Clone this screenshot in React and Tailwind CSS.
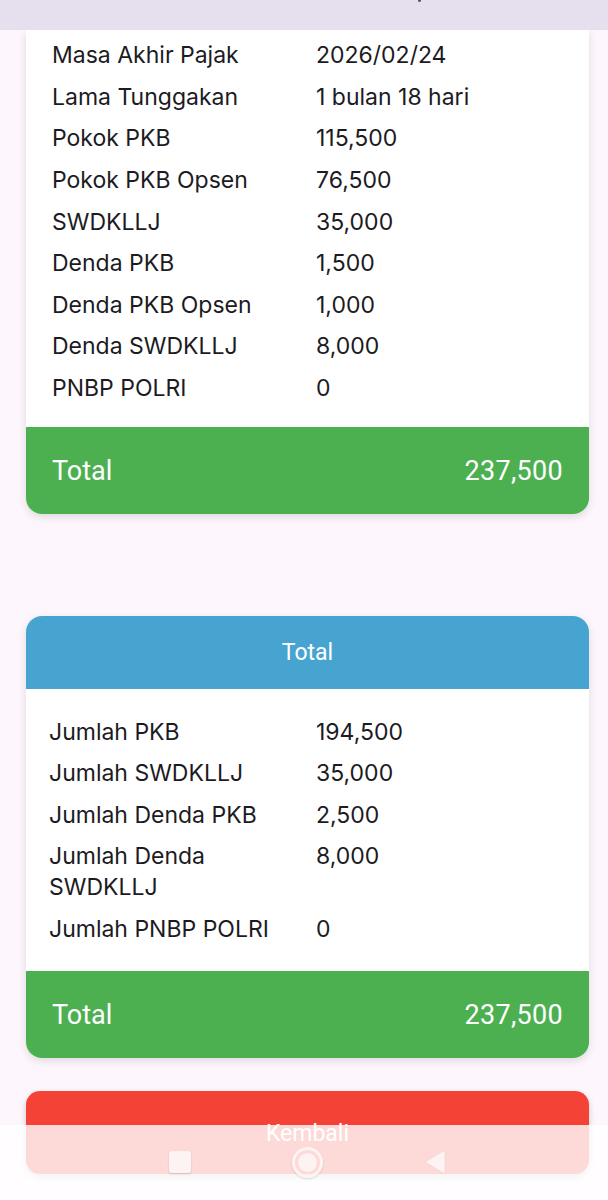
const detail = [
  ["Masa Akhir Pajak", "2026/02/24"],
  ["Lama Tunggakan", "1 bulan 18 hari"],
  ["Pokok PKB", "115,500"],
  ["Pokok PKB Opsen", "76,500"],
  ["SWDKLLJ", "35,000"],
  ["Denda PKB", "1,500"],
  ["Denda PKB Opsen", "1,000"],
  ["Denda SWDKLLJ", "8,000"],
  ["PNBP POLRI", "0"],
];

const summary = [
  ["Jumlah PKB", "194,500"],
  ["Jumlah SWDKLLJ", "35,000"],
  ["Jumlah Denda PKB", "2,500"],
  ["Jumlah Denda SWDKLLJ", "8,000"],
  ["Jumlah PNBP POLRI", "0"],
];

function Rows({ items, labelWidth }) {
  return (
    <div className="flex flex-col">
      {items.map(([label, value]) => (
        <div key={label} className="flex py-[5.3px] text-[23px] leading-[31px] text-[#1c1b1f]">
          <div className={labelWidth}>{label}</div>
          <div className="flex-1">{value}</div>
        </div>
      ))}
    </div>
  );
}

function TotalBar() {
  return (
    <div
      className="flex h-[87px] items-center justify-between rounded-b-[16px] bg-[#4caf50] px-[26px] text-[27px] text-white"
      style={{ fontFamily: "Roboto, sans-serif" }}
    >
      <span>Total</span>
      <span className="tracking-[0.3px]">237,500</span>
    </div>
  );
}

export default function App() {
  return (
    <div
      className="relative h-[1200px] overflow-hidden bg-[#fdf7fd]"
      style={{ fontFamily: "Inter, 'Noto Sans', sans-serif" }}
    >
      <div className="relative z-10 h-[30px] bg-[#e6e0ee]">
        <span className="absolute left-[418px] top-[-2px] block h-[4px] w-[3px] rounded-sm bg-[#5b5765]" />
      </div>

      <div className="pl-[26px] pr-[19px]">
        <div className="rounded-b-[16px] bg-white shadow-[0_3px_8px_rgba(0,0,0,0.12)]">
          <div className="pl-[26px] pt-[5px] pb-[18px]">
            <Rows items={detail} labelWidth="w-[264px] pr-[12px]" />
          </div>
          <TotalBar />
        </div>

        <div className="mt-[102px] rounded-[16px] bg-white shadow-[0_3px_8px_rgba(0,0,0,0.12)]">
          <div
            className="flex h-[73px] items-center justify-center rounded-t-[16px] bg-[#47a4d1] text-[23px] text-white"
            style={{ fontFamily: "Roboto, sans-serif" }}
          >
            Total
          </div>
          <div className="pl-[23px] pt-[22px] pb-[21px]">
            <Rows items={summary} labelWidth="w-[267px] pr-[20px]" />
          </div>
          <TotalBar />
        </div>

        <button
          className="mt-[33px] flex h-[83px] w-full items-center justify-center rounded-[14px] bg-[#f44336] pt-[2px] text-[23px] text-white shadow-[0_3px_6px_rgba(0,0,0,0.2)]"
          style={{ fontFamily: "Roboto, sans-serif" }}
        >
          Kembali
        </button>
      </div>

      <div className="absolute bottom-0 left-0 right-0 top-[1125px] bg-white/80">
        <div className="flex h-[74px] items-center gap-[101px] pl-[169px]">
          <div className="h-[22px] w-[22px] rounded-[3px] bg-[#fdf3f2] shadow-[0_1px_2px_rgba(0,0,0,0.15)]" />
          <div className="flex h-[31px] w-[31px] items-center justify-center rounded-full border-[3px] border-[#fdf3f2] shadow-[0_1px_2px_rgba(0,0,0,0.15)]">
            <div className="h-[19px] w-[19px] rounded-full bg-[#fdf3f2]" />
          </div>
          <svg width="22" height="26" viewBox="0 0 22 26">
            <path d="M21 1 L1 13 L21 25 Z" fill="#fdf3f2" stroke="#f1d6d4" strokeWidth="0.8" strokeLinejoin="round" />
          </svg>
        </div>
      </div>
    </div>
  );
}
